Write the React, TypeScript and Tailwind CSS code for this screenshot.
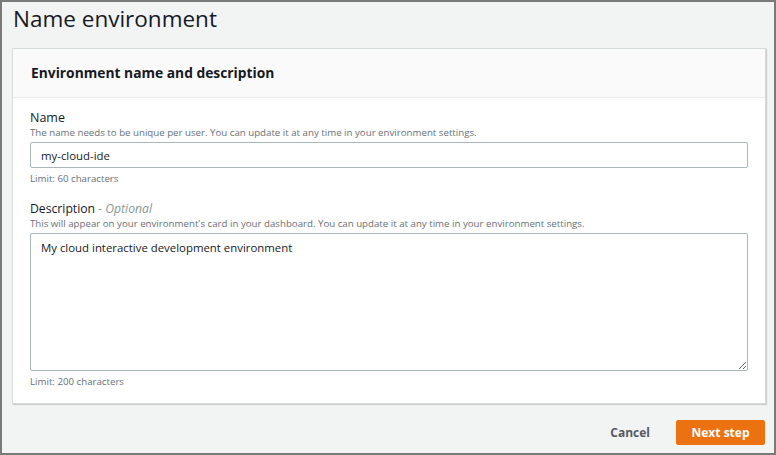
import React, { useState } from 'react';

const App: React.FC = () => {
  const [name, setName] = useState('my-cloud-ide');
  const [description, setDescription] = useState('My cloud interactive development environment');

  return (
    <div className="w-[776px] h-[455px] border-2 border-[#7a7a7a] bg-[#f2f3f3] flex flex-col text-[#16191f] font-['Open_Sans',sans-serif] overflow-hidden">
      <h1 className="pl-[11px] pt-[1px] text-[22.5px] leading-[32px] font-normal">Name environment</h1>

      <div className="mt-[13px] ml-[10px] mr-[8px] bg-white border border-[#d5dbdb] shadow-[1px_1px_1px_rgba(0,0,0,0.15)]">
        <div className="h-[49px] bg-[#fafafa] border-b border-[#eaeded] flex items-center px-[18px]">
          <h2 className="text-[13.8px] font-bold">Environment name and description</h2>
        </div>

        <div className="px-[17px] pt-[12px] pb-[15px]">
          <div>
            <label className="block text-[12.5px] leading-[16px]">Name</label>
            <p className="text-[9.7px] leading-[13px] text-[#687078]">
              The name needs to be unique per user. You can update it at any time in your environment settings.
            </p>
            <input
              type="text"
              value={name}
              onChange={(e) => setName(e.target.value)}
              className="mt-[3px] block w-full h-[26px] px-[10px] border border-[#aab7b8] rounded-[2px] text-[11.4px] outline-none"
            />
            <p className="mt-[4px] text-[9.7px] leading-[13px] text-[#687078]">Limit: 60 characters</p>
          </div>

          <div className="mt-[16px]">
            <label className="block text-[12.2px] leading-[16px]">
              Description <span className="italic text-[#879596]">- Optional</span>
            </label>
            <p className="text-[9.7px] leading-[13px] text-[#687078]">
              This will appear on your environment's card in your dashboard. You can update it at any time in your environment settings.
            </p>
            <textarea
              value={description}
              onChange={(e) => setDescription(e.target.value)}
              className="mt-[3px] block w-full h-[138px] px-[10px] py-[5px] border border-[#aab7b8] rounded-[2px] text-[11.4px] outline-none resize-y"
            />
            <p className="mt-[4px] text-[9.7px] leading-[13px] text-[#687078]">Limit: 200 characters</p>
          </div>
        </div>
      </div>

      <div className="flex justify-end items-center gap-[26px] mt-[16px] mr-[9px]">
        <button className="text-[12px] font-bold text-[#545b64]">Cancel</button>
        <button className="h-[25px] w-[89px] bg-[#ec7211] border border-[#ec7211] rounded-[2px] text-white text-[12px] font-bold">
          Next step
        </button>
      </div>
    </div>
  );
};

export default App;
